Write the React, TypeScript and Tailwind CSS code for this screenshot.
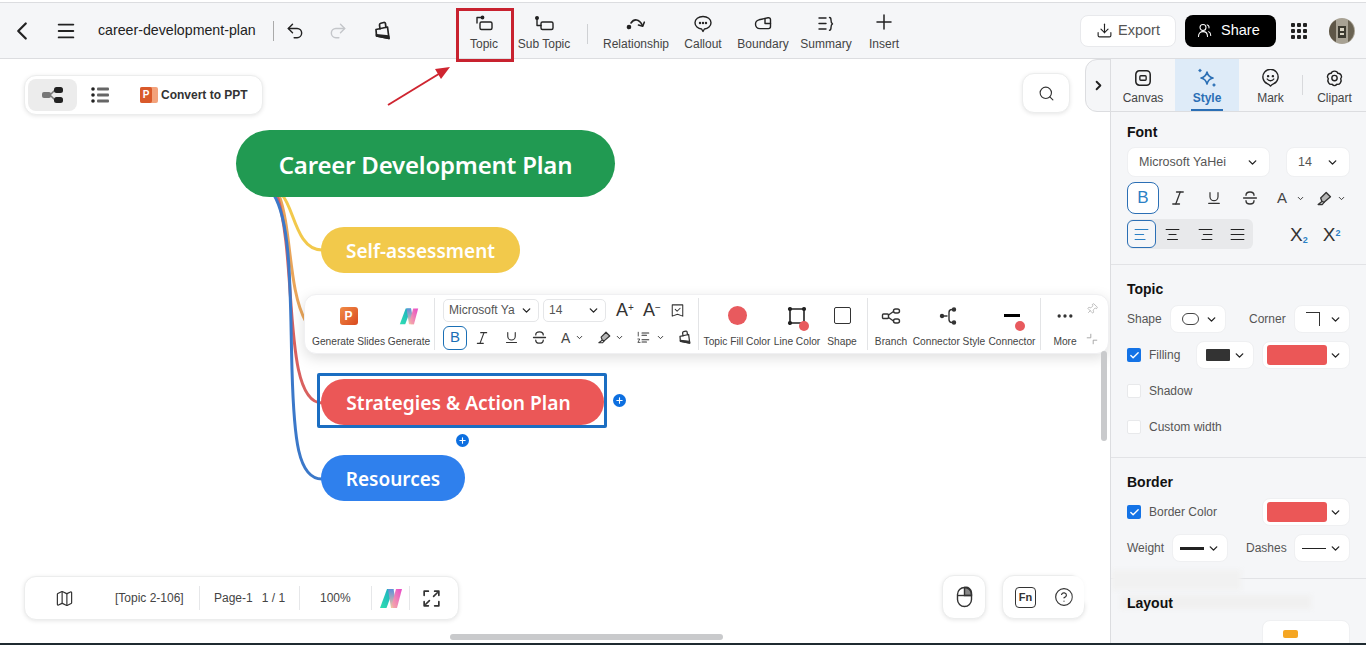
import React from "react"
import {
  AlignCenter,
  AlignJustify,
  AlignLeft,
  AlignRight,
  Check,
  ChevronDown,
  ChevronLeft,
  ChevronRight,
  CircleHelp,
  Download,
  Ellipsis,
  Italic,
  Map as MapIcon,
  Menu,
  Pin,
  Plus,
  Redo2,
  Search,
  Underline,
  Undo2,
} from "lucide-react"

const Line: React.FC<{ size?: number; box?: string; children: React.ReactNode; className?: string }> = ({
  size = 20,
  box = "0 0 20 20",
  children,
  className,
}) => (
  <svg
    width={size}
    height={size}
    viewBox={box}
    fill="none"
    stroke="currentColor"
    strokeWidth="1.4"
    strokeLinecap="round"
    strokeLinejoin="round"
    className={className}
  >
    {children}
  </svg>
)

const BrushIcon = ({ size = 20 }: { size?: number }) => (
  <Line size={size}>
    <path d="M4 8.500 15.500 6l1.500 11.500-12.500-2.500z" strokeWidth="1.700" />
    <path d="M4.400 13.800 16.700 15l.3 2.500-12.500-2.500z" fill="currentColor" />
    <path d="M8 7.800 7.500 4c-.1-1 .6-1.500 1.300-1.700l3-.8c.8-.2 1.500.2 1.600 1l.6 3.800" strokeWidth="1.700" />
  </Line>
)

const StrikeIcon = ({ size = 16 }: { size?: number }) => (
  <Line size={size}>
    <path d="M15 6.500C15 4 13 2.500 10 2.500S5 4 5 6.500" strokeWidth="1.700" />
    <path d="M2 10h16" strokeWidth="1.700" />
    <path d="M5 13.500c0 2.500 2 4 5 4s5-1.500 5-4" strokeWidth="1.700" />
  </Line>
)

const HighlighterIcon = ({ size = 15 }: { size?: number }) => (
  <Line size={size}>
    <path d="M7 13.500 2.500 17h5l2-2.500" strokeWidth="1.600" />
    <path d="M5.500 9.500 12 3l5 5-7.500 6.500-2.500-1z" fill="#b5b5b5" strokeWidth="1.600" />
  </Line>
)

const MLogo = ({ size = 24 }: { size?: number }) => (
  <svg width={size} height={size} viewBox="0 0 24 24">
    <defs>
      <linearGradient id="mleft" x1="0" y1="1" x2="1" y2="0">
        <stop offset="0" stopColor="#2fe0b0" />
        <stop offset="1" stopColor="#1aa8c4" />
      </linearGradient>
      <linearGradient id="mmid" x1="0" y1="0" x2="0" y2="1">
        <stop offset="0" stopColor="#5c8fd8" />
        <stop offset="1" stopColor="#f6c6a0" />
      </linearGradient>
      <linearGradient id="mright" x1="0" y1="1" x2="1" y2="0">
        <stop offset="0" stopColor="#f5b0a8" />
        <stop offset="1" stopColor="#e848c8" />
      </linearGradient>
    </defs>
    <path d="M1 22 8 3h6.500L7.500 22z" fill="url(#mleft)" />
    <path d="M9 3h5.500L18 22h-6z" fill="url(#mmid)" />
    <path d="M13 18 17 3h6l-5 19h-4z" fill="url(#mright)" />
  </svg>
)

const Dot = ({ className }: { className: string }) => <span className={`absolute rounded-full bg-[#e85a5e] ${className}`} />

const TopTool: React.FC<{ label: string; className: string; children: React.ReactNode }> = ({ label, className, children }) => (
  <div className={`flex flex-col items-center shrink-0 ${className}`}>
    <div className="h-6 flex items-end justify-center text-[#222]">{children}</div>
    <span className="mt-[3px] text-[12px] leading-[15px] text-[#444] whitespace-nowrap">{label}</span>
  </div>
)

const Header = () => (
  <header className="h-[56px] shrink-0 bg-[#f5f6f8] border-b border-[#dcdde0] flex items-center text-[#222]">
    <ChevronLeft size={30} strokeWidth={1.8} className="ml-[7px] shrink-0" />
    <Menu size={22} strokeWidth={2} className="ml-[18px] shrink-0" />
    <span className="ml-[21px] text-[14.2px] whitespace-nowrap w-[156px]">career-development-plan</span>
    <span className="ml-[19px] w-px h-5 bg-[#aaa]" />
    <Undo2 size={20} strokeWidth={1.7} className="ml-[11px] shrink-0" />
    <Redo2 size={20} strokeWidth={1.7} className="ml-[23px] shrink-0 text-[#c4c6ca]" />
    <span className="ml-[24px] shrink-0"><BrushIcon /></span>
    <div className="ml-[62px] flex items-start pt-[7px] self-stretch">
      <TopTool label="Topic" className="w-[60px]">
        <Line>
          <path d="M3 9V3.500h4" />
          <circle cx="8.500" cy="3.500" r="1.200" fill="currentColor" />
          <rect x="6" y="8" width="12" height="7.500" rx="1.500" />
        </Line>
      </TopTool>
      <TopTool label="Sub Topic" className="w-[60px]">
        <Line>
          <circle cx="3" cy="4" r="1.300" fill="currentColor" />
          <path d="M3 5v6.500h4" />
          <rect x="7" y="8" width="12" height="7.500" rx="1.500" />
        </Line>
      </TopTool>
      <span className="ml-[13px] mr-[9px] mt-[14px] w-px h-5 bg-[#cfd1d4]" />
      <TopTool label="Relationship" className="w-[78px]">
        <Line>
          <circle cx="3" cy="13" r="1.600" fill="currentColor" />
          <path d="M5 9C8 4.500 13 4.500 16.500 11.500" strokeWidth="1.600" />
          <path d="M12.500 11l4.200 1.200 1.600-4" strokeWidth="1.600" />
        </Line>
      </TopTool>
      <TopTool label="Callout" className="w-[56px]">
        <Line>
          <path d="M10 2.500c4.500 0 8 2.600 8 6.300 0 3.400-3 6-6.600 6.200L10 17.500 8.600 15C5 14.700 2 12.200 2 8.800c0-3.700 3.500-6.300 8-6.300z" />
          <circle cx="7" cy="9" r=".5" fill="currentColor" />
          <circle cx="10" cy="9" r=".5" fill="currentColor" />
          <circle cx="13" cy="9" r=".5" fill="currentColor" />
        </Line>
      </TopTool>
      <TopTool label="Boundary" className="w-[64px]">
        <Line>
          <path d="M2.500 10C2.500 8 3.500 6.500 6 5.800L15 3.800c1.500-.3 2.500.5 2.500 1.800v7c0 1.200-.8 2-2 2H7c-3 0-4.500-2-4.500-4.600z" />
          <path d="M12 4.500V9.500h5.500" />
        </Line>
      </TopTool>
      <TopTool label="Summary" className="w-[62px]">
        <Line>
          <path d="M3 4h7M3 9.500h7M3 15h7" />
          <path d="M13.500 3.500c1.500 0 1.500 1 1.500 2.500s0 3 1.500 3.800C15 10.500 15 12 15 13.500s0 2.700-1.500 2.700" />
        </Line>
      </TopTool>
      <TopTool label="Insert" className="w-[54px]">
        <Plus size={24} strokeWidth={1.5} />
      </TopTool>
    </div>
    <button className="ml-auto w-[96px] h-[32px] bg-white border border-[#e8e9ec] rounded-lg flex items-center justify-center gap-[5px] text-[14.5px] text-[#555]">
      <Download size={17} strokeWidth={1.6} className="text-[#222]" />
      Export
    </button>
    <button className="ml-[9px] w-[91px] h-[32px] bg-black rounded-lg flex items-center pl-[12px] gap-[9px] text-[14.5px] text-white">
      <Line size={15}>
        <circle cx="8" cy="6" r="4" />
        <path d="M2 18c0-4 2.500-6.500 6-6.500s6 2.500 6 6.500M13.500 2.500c1.800.6 2.800 2 2.500 4M15.500 11.500c1.800.8 2.800 2.800 2.800 5" />
      </Line>
      Share
    </button>
    <div className="ml-[15px] grid grid-cols-3 gap-[2px] shrink-0">
      {[0, 1, 2, 3, 4, 5, 6, 7, 8].map((i) => (
        <span key={i} className="w-[4px] h-[4px] bg-[#222] rounded-[1px]" />
      ))}
    </div>
    <svg width="26" height="26" viewBox="0 0 26 26" className="ml-[22px] mr-[11px] shrink-0">
      <circle cx="13" cy="13" r="13" fill="#a8a294" />
      <path d="M0 13a13 13 0 0 1 7-11v22a13 13 0 0 1-7-11z" fill="#5e5647" />
      <path d="M19 2a13 13 0 0 1 0 22z" fill="#6a6353" />
      <path d="M9 8h8v12H9z" fill="#3c3a30" />
      <path d="M11 10h4v3h-4zM11 15h4v2h-4z" fill="#d8d3c3" />
    </svg>
  </header>
)

const MiniTool: React.FC<{ label: string; className?: string; children: React.ReactNode }> = ({ label, className, children }) => (
  <div className={`flex flex-col items-center shrink-0 ${className}`}>
    <div className="relative h-[30px] flex items-center justify-center text-[#333]">{children}</div>
    <span className="mt-[4px] text-[10.2px] leading-[13px] text-[#444] whitespace-nowrap">{label}</span>
  </div>
)

const Divider = () => <span className="block w-px h-[52px] bg-[#e3e4e6] shrink-0" />

const ContextBar = () => (
  <div className="absolute left-[304px] top-[235px] w-[805px] h-[60px] bg-white rounded-xl shadow-[0_4px_14px_rgba(0,0,0,0.13)] border border-[#f0f0f2] flex items-center">
    <MiniTool label="Generate Slides" className="ml-[7px] w-[73px]">
      <span className="w-[18px] h-[18px] rounded-[3px] bg-gradient-to-br from-[#f08a45] to-[#d9481f] text-white text-[12px] font-bold flex items-center justify-center">P</span>
    </MiniTool>
    <MiniTool label="Generate" className="ml-[1px] w-[46px]">
      <MLogo size={20} />
    </MiniTool>
    <span className="ml-[2px]"><Divider /></span>
    <div className="ml-[8px] w-[255px] shrink-0">
      <div className="flex items-center">
        <div className="w-[96px] h-[23px] border border-[#e5e6e8] rounded-[5px] flex items-center pl-[5px] pr-[5px] text-[12px] text-[#555]">
          <span className="whitespace-nowrap">Microsoft Ya</span>
          <ChevronDown size={13} strokeWidth={2.4} className="ml-auto text-[#222]" />
        </div>
        <div className="ml-[4px] w-[63px] h-[23px] border border-[#e5e6e8] rounded-[5px] flex items-center px-[5px] text-[12px] text-[#555]">
          14
          <ChevronDown size={13} strokeWidth={2.4} className="ml-auto text-[#222]" />
        </div>
        <span className="ml-[10px] text-[18px] leading-none text-[#333] w-[27px]">A<sup className="text-[10px]">+</sup></span>
        <span className="text-[18px] leading-none text-[#333] w-[27px]">A<sup className="text-[10px]">−</sup></span>
        <Line size={15} className="text-[#333]">
          <path d="M3 2.500h14v15L10 15l-7 2.500z" />
          <path d="M7 8.500l2.500 2.500L13.500 7" />
        </Line>
      </div>
      <div className="mt-[4px] flex items-center text-[#333]">
        <span className="w-[24px] h-[24px] rounded-md border border-[#1a6fb5] flex items-center justify-center text-[15px] text-[#1a6fb5]">B</span>
        <Italic size={16} strokeWidth={1.7} className="ml-[7px]" />
        <Underline size={15} strokeWidth={1.8} className="ml-[14px]" />
        <span className="ml-[13px]"><StrikeIcon size={15} /></span>
        <span className="ml-[14px] text-[14px] leading-none text-[#444]">A</span>
        <ChevronDown size={9} strokeWidth={2.5} className="ml-[5px]" />
        <span className="ml-[13px]"><HighlighterIcon /></span>
        <ChevronDown size={9} strokeWidth={2.5} className="ml-[3px]" />
        <Line size={15} className="ml-[12px]">
          <path d="M8 4h9M8 7h6M8 13h9M8 16h6" />
          <path d="M3 3v5M2.500 12h2.500l-2.500 4.500H5.500" strokeWidth="1.100" />
        </Line>
        <ChevronDown size={9} strokeWidth={2.5} className="ml-[5px]" />
        <span className="ml-[12px]"><BrushIcon size={15} /></span>
      </div>
    </div>
    <Divider />
    <MiniTool label="Topic Fill Color" className="ml-[4px] w-[68px]">
      <span className="w-[19px] h-[19px] rounded-full bg-[#e85a5e]" />
    </MiniTool>
    <MiniTool label="Line Color" className="ml-[1px] w-[50px]">
      <Line size={20} className="text-[#222]">
        <rect x="3" y="3" width="14" height="14" strokeWidth="1.600" />
        <circle cx="3" cy="3" r="1.400" fill="currentColor" />
        <circle cx="17" cy="3" r="1.400" fill="currentColor" />
        <circle cx="3" cy="17" r="1.400" fill="currentColor" />
      </Line>
      <Dot className="left-[12px] top-[20px] w-[10px] h-[10px]" />
    </MiniTool>
    <MiniTool label="Shape" className="ml-[5px] w-[30px]">
      <span className="w-[17px] h-[17px] border-[1.5px] border-[#333] rounded-[2px]" />
    </MiniTool>
    <span className="ml-[10px]"><Divider /></span>
    <MiniTool label="Branch" className="ml-[5px] w-[36px]">
      <Line size={20}>
        <rect x="1.500" y="8" width="6" height="4.500" rx="1" />
        <rect x="12.500" y="3" width="6" height="4" rx="2" />
        <rect x="12.500" y="13" width="6" height="4" rx="2" />
        <path d="M7.500 9 12.500 5.500M7.500 11.500l5 3.500" />
      </Line>
    </MiniTool>
    <MiniTool label="Connector Style" className="ml-[4px] w-[72px]">
      <Line size={20}>
        <circle cx="3" cy="10" r="1.500" fill="currentColor" />
        <circle cx="15" cy="3.500" r="1.500" fill="currentColor" />
        <circle cx="15" cy="16.500" r="1.500" fill="currentColor" />
        <path d="M3 10h5M15 3.500h-2c-2 0-3 1-3 3v7c0 2 1 3 3 3h2" />
      </Line>
    </MiniTool>
    <MiniTool label="Connector" className="ml-[2px] w-[50px]">
      <span className="w-[16px] h-[3px] bg-black" />
      <Dot className="left-[11px] top-[20px] w-[10px] h-[10px]" />
    </MiniTool>
    <span className="ml-[3px]"><Divider /></span>
    <MiniTool label="More" className="ml-[9px] w-[30px]">
      <Ellipsis size={20} />
    </MiniTool>
    <div className="ml-[2px] w-[20px] h-[50px] flex flex-col items-center justify-between py-[4px] text-[#999]">
      <Pin size={12} strokeWidth={1.2} className="rotate-45" />
      <Line size={12} className="text-[#999]">
        <path d="M2 8h6V2M18 12h-6v6" />
      </Line>
    </div>
  </div>
)

const FloatBox: React.FC<{ className: string; children: React.ReactNode }> = ({ className, children }) => (
  <div className={`absolute bg-white rounded-xl border border-[#eceded] shadow-[0_1px_4px_rgba(0,0,0,0.1)] flex items-center ${className}`}>
    {children}
  </div>
)

const Sep = () => <span className="block w-px h-[24px] bg-[#e6e7e9] shrink-0" />

const CanvasArea = () => (
  <main className="relative flex-1 bg-white overflow-hidden">
    <svg className="absolute left-0 top-0 w-[1110px] h-[586px]" viewBox="0 59 1110 586" fill="none" strokeWidth="3">
      <path d="M282 195C294 207 296 250 322 250" stroke="#f2c94c" />
      <path d="M279 195C292 230 288 290 306 322" stroke="#e9a55a" />
      <path d="M277 195C298 260 282 403 322 403" stroke="#d9615f" />
      <path d="M274 195C292 225 290 300 292 370C294 440 298 479 322 479" stroke="#3b78c9" />
    </svg>

    <div className="absolute left-[236px] top-[71px] w-[379px] h-[67px] pt-[2px] rounded-full bg-[#219a52] flex items-center justify-center text-white text-[24px] tracking-[-0.2px] font-semibold font-['Noto_Sans',sans-serif] whitespace-nowrap">
      Career Development Plan
    </div>
    <div className="absolute left-[321px] top-[168px] w-[199px] h-[46px] pt-[2px] rounded-full bg-[#f2c94b] flex items-center justify-center text-white text-[19px] font-semibold font-['Noto_Sans',sans-serif] whitespace-nowrap">
      Self-assessment
    </div>
    <div className="absolute left-[317px] top-[314px] w-[290px] h-[55px] border-[3px] border-[#1b6ec2] rounded-[2px]" />
    <div className="absolute left-[321px] top-[320px] w-[283px] h-[46px] pt-[2px] pr-[8px] rounded-full bg-[#eb5757] flex items-center justify-center text-white text-[19.2px] font-semibold font-['Noto_Sans',sans-serif] whitespace-nowrap">
      Strategies &amp; Action Plan
    </div>
    <div className="absolute left-[321px] top-[396px] w-[144px] h-[46px] pt-[2px] rounded-full bg-[#2f80ed] flex items-center justify-center text-white text-[19px] font-semibold font-['Noto_Sans',sans-serif] whitespace-nowrap">
      Resources
    </div>
    <span className="absolute left-[613px] top-[335px] w-[13px] h-[13px] rounded-full bg-[#0d6fe0] flex items-center justify-center text-white">
      <Plus size={9} strokeWidth={3} />
    </span>
    <span className="absolute left-[456px] top-[375px] w-[13px] h-[13px] rounded-full bg-[#0d6fe0] flex items-center justify-center text-white">
      <Plus size={9} strokeWidth={3} />
    </span>

    <svg className="absolute left-[380px] top-0 w-[80px] h-[55px]" viewBox="0 0 80 55">
      <path d="M8 46 62 13" stroke="#cf2530" strokeWidth="2" />
      <path d="M70 8 55 10l6 10z" fill="#cf2530" />
    </svg>

    <FloatBox className="left-[24px] top-[16px] w-[239px] h-[40px] pl-[3px]">
      <span className="w-[49px] h-[32px] rounded-lg bg-[#ececec] flex items-center justify-center">
        <svg width="22" height="16" viewBox="0 0 22 16">
          <rect x="0" y="5" width="9" height="6" rx="2" fill="#777" />
          <path d="M8 8 13 3M8 8l5 5" stroke="#777" strokeWidth="1.500" />
          <rect x="12" y="0" width="9" height="6" rx="2.500" fill="#222" />
          <rect x="12" y="10" width="9" height="6" rx="2.500" fill="#222" />
        </svg>
      </span>
      <svg width="18" height="16" viewBox="0 0 18 16" className="ml-[14px]">
        <circle cx="2" cy="2" r="1.800" fill="#222" />
        <circle cx="2" cy="8" r="1.800" fill="#222" />
        <circle cx="2" cy="14" r="1.800" fill="#222" />
        <rect x="6" y="0.500" width="12" height="3" rx="1" fill="#666" />
        <rect x="6" y="6.500" width="12" height="3" rx="1" fill="#666" />
        <rect x="6" y="12.500" width="12" height="3" rx="1" fill="#666" />
      </svg>
      <span className="ml-[31px] w-[18px] h-[16px] relative rounded-[2px] bg-[#f3a27b] shrink-0">
        <span className="absolute left-0 top-0 w-[12px] h-[16px] rounded-[2px] bg-[#d9592a] text-white text-[10px] font-bold leading-[16px] text-center">P</span>
      </span>
      <span className="ml-[3px] text-[12px] font-bold text-[#333] whitespace-nowrap">Convert to PPT</span>
    </FloatBox>

    <FloatBox className="left-[1022px] top-[14px] w-[48px] h-[40px] justify-center">
      <Search size={17} strokeWidth={1.6} className="text-[#333]" />
    </FloatBox>

    <div className="absolute left-[1085px] top-0 w-[26px] h-[53px] bg-[#f5f6f8] border border-[#dcdde0] rounded-l-xl flex items-center justify-center">
      <ChevronRight size={15} strokeWidth={3} className="text-[#222]" />
    </div>

    <ContextBar />

    <FloatBox className="left-[24px] top-[517px] w-[435px] h-[44px] text-[12px] text-[#444]">
      <MapIcon size={19} strokeWidth={1.5} className="ml-[30px] text-[#333]" />
      <span className="ml-[41px] w-[79px] whitespace-nowrap">[Topic 2-106]</span>
      <span className="ml-[5px]"><Sep /></span>
      <span className="ml-[14px] w-[85px] flex gap-[9px] whitespace-nowrap">
        <span>Page-1</span>
        <span>1 / 1</span>
      </span>
      <Sep />
      <span className="ml-[20px] w-[51px] whitespace-nowrap">100%</span>
      <Sep />
      <span className="ml-[7px] w-[27px]"><MLogo size={24} /></span>
      <span className="ml-[3px]"><Sep /></span>
      <Line size={21} className="ml-[11px] text-[#333]">
        <path d="M3 7V3h4M13 3h4v4M17 13v4h-4M7 17H3v-4" strokeWidth="1.600" />
        <path d="M12 8l3.500-3.500M8 12l-3.500 3.500" strokeWidth="1.600" />
      </Line>
    </FloatBox>

    <FloatBox className="left-[942px] top-[516px] w-[44px] h-[44px] justify-center">
      <svg width="17" height="22" viewBox="0 0 17 22" fill="none" stroke="#333" strokeWidth="1.400">
        <path d="M8.500 1.500v8H15.500V7a5.500 5.500 0 0 0-7-5.500z" fill="#888" />
        <rect x="1.500" y="1.500" width="14" height="19" rx="7" />
        <path d="M1.500 9.500h14" />
      </svg>
    </FloatBox>

    <FloatBox className="left-[1002px] top-[516px] w-[83px] h-[44px] pl-[12px]">
      <span className="w-[21px] h-[21px] border-[1.5px] border-[#333] rounded-[4px] flex items-center justify-center text-[11px] font-semibold text-[#333]">Fn</span>
      <CircleHelp size={20} strokeWidth={1.4} className="ml-[18px] text-[#333]" />
    </FloatBox>
    <span className="absolute left-[1074px] top-[512px] w-[20px] h-[32px] bg-white/80 blur-[2px]" />

    <span className="absolute left-[1101px] top-[292px] w-[6px] h-[90px] bg-[#c9cacc] rounded-sm" />
    <span className="absolute left-[450px] top-[575px] w-[273px] h-[6px] bg-[#c9cacc] rounded-full" />
  </main>
)

const Sel: React.FC<{ className: string; children?: React.ReactNode }> = ({ className, children }) => (
  <div className={`h-[28px] shrink-0 bg-white rounded-lg border border-[#eff0f2] flex items-center justify-between pr-[7px] ${className}`}>
    {children}
    <ChevronDown size={13} strokeWidth={2.5} className="text-[#222] shrink-0" />
  </div>
)

const Tab: React.FC<{ label: string; active?: boolean; className: string; children: React.ReactNode }> = ({ label, active, className, children }) => (
  <div className={`relative h-full flex flex-col items-center pt-[9px] shrink-0 ${active ? "bg-[#deebf8] text-[#2b6fb5]" : "text-[#222]"} ${className}`}>
    <div className="h-[20px] flex items-center justify-center">{children}</div>
    <span className={`mt-[3px] text-[12px] leading-[15px] ${active ? "font-bold" : "text-[#444]"}`}>{label}</span>
    {active && <span className="absolute bottom-0 left-[16px] w-[32px] h-[2px] bg-[#2b6fb5]" />}
  </div>
)

const Heading = ({ children }: { children: React.ReactNode }) => (
  <h3 className="relative z-10 h-5 text-[14px] leading-5 font-bold text-[#111]">{children}</h3>
)

const Box = ({ checked }: { checked?: boolean }) =>
  checked ? (
    <span className="w-[14px] h-[14px] rounded-[2px] bg-[#1473e6] flex items-center justify-center text-white shrink-0">
      <Check size={11} strokeWidth={3} />
    </span>
  ) : (
    <span className="w-[14px] h-[14px] rounded-[2px] bg-white border border-[#e8e9eb] shrink-0" />
  )

const Swatch = () => <span className="ml-[4px] w-[60px] h-[20px] rounded-[3px] bg-[#eb5757]" />

const Sidebar = () => (
  <aside className="relative w-[256px] shrink-0 bg-[#f5f6f8] border-l border-[#dcdde0] overflow-hidden text-[12px] text-[#555]">
    <div className="h-[53px] border-b border-[#dcdde0] flex items-center">
      <Tab label="Canvas" className="w-[64px]">
        <Line size={18}>
          <rect x="2" y="2" width="16" height="16" rx="4" strokeWidth="1.700" />
          <rect x="6.500" y="7.500" width="7" height="5" rx="1" strokeWidth="1.500" />
        </Line>
      </Tab>
      <Tab label="Style" active className="w-[64px]">
        <Line size={20}>
          <path d="M10 4c.8 3.500 2.500 5.200 6 6-3.500.8-5.200 2.500-6 6-.8-3.500-2.500-5.200-6-6 3.500-.8 5.200-2.500 6-6z" strokeWidth="1.600" />
          <path d="M3 1.500v2M2 2.500h2M17 16v2M16 17h2" />
        </Line>
      </Tab>
      <Tab label="Mark" className="w-[63px]">
        <Line size={19}>
          <path d="M10 18c-1-1.200-2-1.800-3.500-2.500A8 8 0 1 1 13.500 15.500C12 16.200 11 16.800 10 18z" strokeWidth="1.500" />
          <circle cx="7.500" cy="7.500" r=".6" fill="currentColor" />
          <circle cx="12.500" cy="7.500" r=".6" fill="currentColor" />
          <path d="M6.500 10.500c1.500 2.500 5.500 2.500 7 0" />
        </Line>
      </Tab>
      <span className="w-px h-5 bg-[#d8d9dc] shrink-0" />
      <Tab label="Clipart" className="w-[63px]">
        <Line size={19}>
          <path d="M6.500 4.500C7.200 1.500 12.800 1.500 13.500 4.500 16.500 4.300 18.800 8 16.500 10.200 18 13 15.500 17 12.500 16 11 18 9 18 7.500 16 4.500 17 2 13 3.500 10.200 1.200 8 3.500 4.300 6.500 4.500z" strokeWidth="1.500" />
          <circle cx="10" cy="9.500" r="2.800" strokeWidth="1.500" />
        </Line>
      </Tab>
    </div>

    <section className="pl-[16px] pr-[16px] pt-[10px] pb-[15px] border-b border-[#e2e3e6]">
      <Heading>Font</Heading>
      <div className="mt-[5px] flex justify-between text-[12.5px]">
        <Sel className="w-[143px] !h-[30px] pl-[11px] !pr-[10px]"><span>Microsoft YaHei</span></Sel>
        <Sel className="w-[64px] !h-[30px] pl-[11px] !pr-[10px]"><span>14</span></Sel>
      </div>
      <div className="mt-[5px] h-[32px] flex items-center text-[#333]">
        <span className="w-[32px] h-[32px] rounded-lg border border-[#2b6fb5] bg-white flex items-center justify-center text-[17px] text-[#2b80c5]">B</span>
        <span className="ml-[1px] w-[36px] flex justify-center"><Italic size={18} strokeWidth={1.7} /></span>
        <span className="w-[36px] flex justify-center"><Underline size={16} strokeWidth={1.8} /></span>
        <span className="w-[36px] flex justify-center"><StrikeIcon /></span>
        <span className="w-[28px] text-center text-[15px] text-[#444]">A</span>
        <ChevronDown size={9} strokeWidth={2.5} />
        <span className="ml-[11px]"><HighlighterIcon size={17} /></span>
        <ChevronDown size={9} strokeWidth={2.5} className="ml-[4px]" />
      </div>
      <div className="mt-[5px] h-[30px] flex items-center text-[#222]">
        <div className="w-[126px] h-[30px] rounded-md bg-[#e8e9eb] flex items-center">
          <span className="w-[29px] h-[28px] rounded-md border border-[#2b6fb5] bg-[#f5f6f8] flex items-center justify-center text-[#2b80c5]">
            <AlignLeft size={17} strokeWidth={1.6} />
          </span>
          <span className="w-[33px] flex justify-center"><AlignCenter size={17} strokeWidth={1.6} /></span>
          <span className="w-[32px] flex justify-center"><AlignRight size={17} strokeWidth={1.6} /></span>
          <span className="w-[32px] flex justify-center"><AlignJustify size={17} strokeWidth={1.6} /></span>
        </div>
        <span className="ml-[37px] text-[19px] font-light leading-none text-[#333]">X<sub className="text-[9px] font-bold text-[#2b80c5]">2</sub></span>
        <span className="ml-[15px] text-[19px] font-light leading-none text-[#333]">X<sup className="text-[9px] font-bold text-[#2b80c5]">2</sup></span>
      </div>
    </section>

    <section className="pl-[16px] pr-[16px] pt-[14px] pb-[20px] border-b border-[#e2e3e6]">
      <Heading>Topic</Heading>
      <div className="mt-[6px] flex items-center">
        <span className="w-[43px]">Shape</span>
        <Sel className="w-[56px] pl-[11px]">
          <span className="w-[17px] h-[12px] rounded-[6px] border border-[#444]" />
        </Sel>
        <span className="ml-[23px] w-[45px]">Corner</span>
        <Sel className="w-[56px] pl-[11px]">
          <span className="w-[14px] h-[14px] border-t border-r border-[#333]" />
        </Sel>
      </div>
      <div className="mt-[8px] flex items-center">
        <Box checked />
        <span className="ml-[8px] w-[47px]">Filling</span>
        <Sel className="w-[58px] pl-[9px]">
          <span className="w-[24px] h-[12px] bg-[#333] rounded-[1px]" />
        </Sel>
        <Sel className="ml-[8px] w-[88px]"><Swatch /></Sel>
      </div>
      <div className="mt-[12px] h-5 flex items-center">
        <Box />
        <span className="ml-[8px]">Shadow</span>
      </div>
      <div className="mt-[16px] h-5 flex items-center">
        <Box />
        <span className="ml-[8px]">Custom width</span>
      </div>
    </section>

    <section className="pl-[16px] pr-[16px] pt-[14px] pb-[16px] border-b border-[#e2e3e6]">
      <Heading>Border</Heading>
      <div className="mt-[6px] flex items-center justify-between">
        <span className="flex items-center">
          <Box checked />
          <span className="ml-[8px]">Border Color</span>
        </span>
        <Sel className="w-[88px]"><Swatch /></Sel>
      </div>
      <div className="mt-[8px] flex items-center">
        <span className="w-[45px]">Weight</span>
        <Sel className="w-[56px] pl-[7px]">
          <span className="w-[24px] h-[3px] bg-[#222]" />
        </Sel>
        <span className="ml-[18px] w-[48px]">Dashes</span>
        <Sel className="w-[56px] pl-[7px]">
          <span className="w-[24px] h-px bg-[#222]" />
        </Sel>
      </div>
    </section>

    <section className="pl-[16px] pr-[16px] pt-[14px]">
      <Heading>Layout</Heading>
      <div className="mt-[7px] ml-[135px] w-[88px] h-[40px] bg-white rounded-lg border border-[#eff0f2] pt-[9px] pl-[20px]">
        <span className="block w-[15px] h-[8px] rounded-[2px] bg-[#f5a623]" />
      </div>
    </section>

    <span className="absolute left-0 top-[511px] w-[130px] h-[20px] bg-[#f1f1f1] blur-[2px]" />
    <span className="absolute left-[10px] top-[536px] w-[190px] h-[14px] bg-[#f0f0f0] blur-[2px]" />
  </aside>
)

export default function App() {
  return (
    <div className="relative w-screen h-screen overflow-hidden flex flex-col bg-white font-['Liberation_Sans',Arial,sans-serif]">
      <div className="h-[3px] shrink-0 bg-white border-b border-[#dcdde0]" />
      <Header />
      <div className="flex-1 min-h-0 flex">
        <CanvasArea />
        <Sidebar />
      </div>
      <div className="h-[2px] shrink-0 bg-[#1f2a30]" />
      <span className="absolute left-[456px] top-[8px] w-[58px] h-[54px] border-[3px] border-[#c8222f]" />
    </div>
  )
}
